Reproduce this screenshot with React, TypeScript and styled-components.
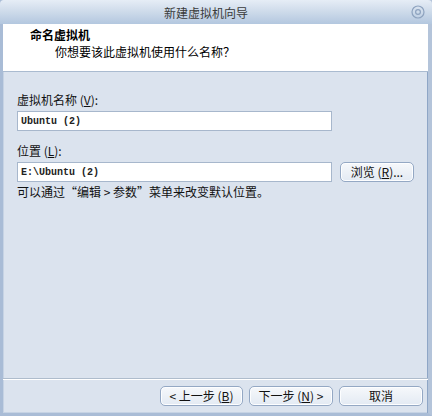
import styled, { createGlobalStyle } from "styled-components";

const GlobalStyle = createGlobalStyle`
  html, body {
    margin: 0;
    padding: 0;
    background: #dbe3ee;
  }
  body {
    font-family: "Noto Sans CJK SC", "Liberation Sans", sans-serif;
    font-size: 12px;
    color: #000;
  }
`;

function App() {
  return (
    <>
      <GlobalStyle />
      <Window>
        <TitleBar>
          <Title>新建虚拟机向导</Title>
          <CloseButton width="14" height="14" viewBox="0 0 14 14">
            <circle cx="7" cy="7" r="6" fill="none" stroke="#8ea3bf" strokeWidth="1.2" />
            <circle cx="7" cy="7" r="2.4" fill="none" stroke="#8ea3bf" strokeWidth="1.2" />
          </CloseButton>
        </TitleBar>
        <Header>
          <HeaderTitle>命名虚拟机</HeaderTitle>
          <HeaderSubtitle>你想要该此虚拟机使用什么名称？</HeaderSubtitle>
        </Header>
        <Body>
          <Label>
            虚拟机名称 (<u>V</u>):
          </Label>
          <FieldRow>
            <TextInput defaultValue="Ubuntu (2)" />
          </FieldRow>
          <Label $spaced>
            位置 (<u>L</u>):
          </Label>
          <FieldRow>
            <TextInput defaultValue="E:\Ubuntu (2)" />
            <Button $width={74}>
              浏览 (<u>R</u>)...
            </Button>
          </FieldRow>
          <Hint>可以通过“编辑 &gt; 参数”菜单来改变默认位置。</Hint>
        </Body>
        <Footer>
          <Button $width={83}>
            &lt; 上一步 (<u>B</u>)
          </Button>
          <Button $width={84}>
            下一步 (<u>N</u>) &gt;
          </Button>
          <Button $width={84}>取消</Button>
        </Footer>
      </Window>
    </>
  );
}

const Window = styled.div`
  box-sizing: border-box;
  width: 432px;
  height: 416px;
  display: flex;
  flex-direction: column;
  background: #dbe3ee;
  border-left: 3px solid #a9bcd6;
  border-right: 4px solid #b4c4da;
  border-bottom: 3px solid #a9bcd6;
  box-shadow: inset 1px 0 0 #c6d3e4, inset -1px 0 0 #8ea6c6, inset 0 -1px 0 #c6d3e4;
`;

const TitleBar = styled.div`
  position: relative;
  height: 24px;
  margin: 0 -4px 0 -3px;
  display: flex;
  align-items: center;
  justify-content: center;
  padding-right: 20px;
  background: linear-gradient(#e6edf6 0%, #d2deec 40%, #b3c7df 100%);
  border-radius: 4px 4px 0 0;
`;

const Title = styled.span`
  color: #3a3a3a;
  font-size: 12px;
`;

const CloseButton = styled.svg`
  position: absolute;
  right: 7px;
  top: 5px;
`;

const Header = styled.div`
  height: 48px;
  background: #fff;
  border-bottom: 1px solid #aabbd0;
  padding: 4px 0 0 24px;
  box-sizing: border-box;
`;

const HeaderTitle = styled.div`
  font-weight: bold;
  font-size: 12px;
  line-height: 14px;
  margin-left: 3px;
`;

const HeaderSubtitle = styled.div`
  font-size: 12px;
  line-height: 14px;
  margin: 3px 0 0 28px;
`;

const Body = styled.div`
  flex: 1;
  padding: 20px 0 0 14px;
`;

const Label = styled.div<{ $spaced?: boolean }>`
  line-height: 16px;
  margin-top: ${(p) => (p.$spaced ? "12px" : "0")};
  margin-bottom: 3px;
  color: #111;

  u {
    text-decoration: underline;
  }
`;

const FieldRow = styled.div`
  display: flex;
  align-items: center;
  gap: 8px;
`;

const TextInput = styled.input`
  box-sizing: border-box;
  width: 315px;
  height: 20px;
  border: 1px solid #a7b7cc;
  background: #fff;
  padding: 0 3px;
  font-family: "Liberation Mono", "Noto Sans CJK SC", monospace;
  font-size: 10px;
  font-weight: bold;
  color: #222;
  outline: none;
`;

const Button = styled.button<{ $width: number }>`
  box-sizing: border-box;
  width: ${(p) => p.$width}px;
  height: 20px;
  padding: 0;
  border: 1px solid #94a8c4;
  border-radius: 5px;
  background: linear-gradient(#f6f8fb, #e3eaf3);
  box-shadow: inset 0 0 0 1px #fdfeff;
  font-family: "Noto Sans CJK SC", "Liberation Sans", sans-serif;
  font-size: 12px;
  color: #111;
  line-height: 18px;

  u {
    text-decoration: underline;
  }
`;

const Hint = styled.div`
  margin-top: 2px;
  line-height: 16px;
  color: #111;
`;

const Footer = styled.div`
  height: 35px;
  box-sizing: border-box;
  border-top: 1px solid #aebccc;
  box-shadow: inset 0 1px 0 #fff;
  display: flex;
  justify-content: flex-end;
  align-items: flex-start;
  gap: 6px;
  padding: 7px 5px 0 0;
`;

export default App;
